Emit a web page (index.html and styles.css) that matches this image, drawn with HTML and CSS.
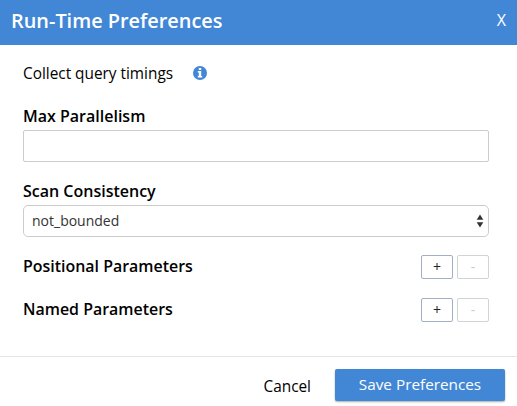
FILE: index.html
```html
<!DOCTYPE html>
<html lang="en">
<head>
<meta charset="utf-8">
<title>Run-Time Preferences</title>
<link rel="stylesheet" href="styles.css">
</head>
<body>
<div class="dialog">
  <header class="header"><h1>Run-Time Preferences</h1><span class="close">X</span></header>
  <main class="content">
    <div class="timings"><span>Collect query timings</span>
      <svg class="info" viewBox="0 0 14 14"><circle cx="7" cy="7" r="7" fill="#4287d6"/><path d="M5.8 2h2.4v2H5.8zM4.8 5h3.4v5h1v1.5H4.8V10h1V6.5h-1z" fill="#fff"/></svg>
    </div>
    <label class="label" for="max">Max Parallelism</label>
    <input class="field" id="max" type="text">
    <div class="label scan">Scan Consistency</div>
    <div class="field select"><span>not_bounded</span>
      <svg class="arrows" viewBox="0 0 8 14"><path d="M4 .5l3.3 5.3H.7zM4 13.5l3.3-5.3H.7z" fill="#333"/></svg>
    </div>
    <div class="params"><span>Positional Parameters</span><div class="buttons"><button>+</button><button disabled>-</button></div></div>
    <div class="params"><span>Named Parameters</span><div class="buttons"><button>+</button><button disabled>-</button></div></div>
  </main>
  <footer class="footer"><span class="cancel">Cancel</span><button class="save">Save Preferences</button></footer>
</div>
</body>
</html>
```
FILE: styles.css
```css
* { box-sizing: border-box; }
body { margin: 0; font: 15.36px/20px "Open Sans", sans-serif; color: #000; background: #fff; }
button, input { font-family: inherit; margin: 0; }
.dialog { height: 406px; display: flex; flex-direction: column; }
.header { height: 45px; padding: 0 11px 3px; display: flex; align-items: center; justify-content: space-between; background: #4287d6; color: #fff; }
h1 { margin: 0; font-size: 19.9px; line-height: 28px; font-weight: 600; }
.close { font-size: 16px; padding-bottom: 2px; }
.content { flex: 1; padding: 18px 28px 0 23px; display: flex; flex-direction: column; }
.timings { display: flex; align-items: center; gap: 20px; height: 20px; }
.timings span { padding-top: 2px; }
.info { width: 14px; height: 14px; }
.label { margin-top: 23px; height: 20px; font-size: 16px; font-weight: 600; }
.field { margin-top: 4px; width: 466px; height: 32px; border: 1px solid #ccc; border-radius: 2px; background: #fff; }
.scan { margin-top: 19px; }
.select { border-radius: 5px; padding: 0 4px 0 8px; display: flex; align-items: center; justify-content: space-between; font-size: 14px; color: #333; }
.arrows { width: 8px; height: 14px; }
.params { display: flex; align-items: center; justify-content: space-between; height: 24px; margin-top: 18px; font-size: 15.95px; font-weight: 600; }
.params > span { padding-bottom: 2px; }
.params + .params { margin-top: 19px; }
.buttons { display: flex; gap: 4px; }
.buttons button { width: 32px; height: 24px; padding: 0 0 2px; border: 1px solid #a2afc2; border-radius: 2px; background: #fff; font-size: 14px; color: #222; }
.buttons button:disabled { border-color: #d1d3d5; color: #ccc; }
.footer { height: 50px; border-top: 1px solid #e5e5e5; padding: 12px 12px 0 0; display: flex; justify-content: flex-end; gap: 24px; }
.cancel { line-height: 35px; }
.save { width: 170px; height: 32px; padding: 0 0 2px; border: 0; border-radius: 2px; background: #4287d6; color: #fff; font-size: 15.3px; box-shadow: 0 1px 2px #0005; }
```
